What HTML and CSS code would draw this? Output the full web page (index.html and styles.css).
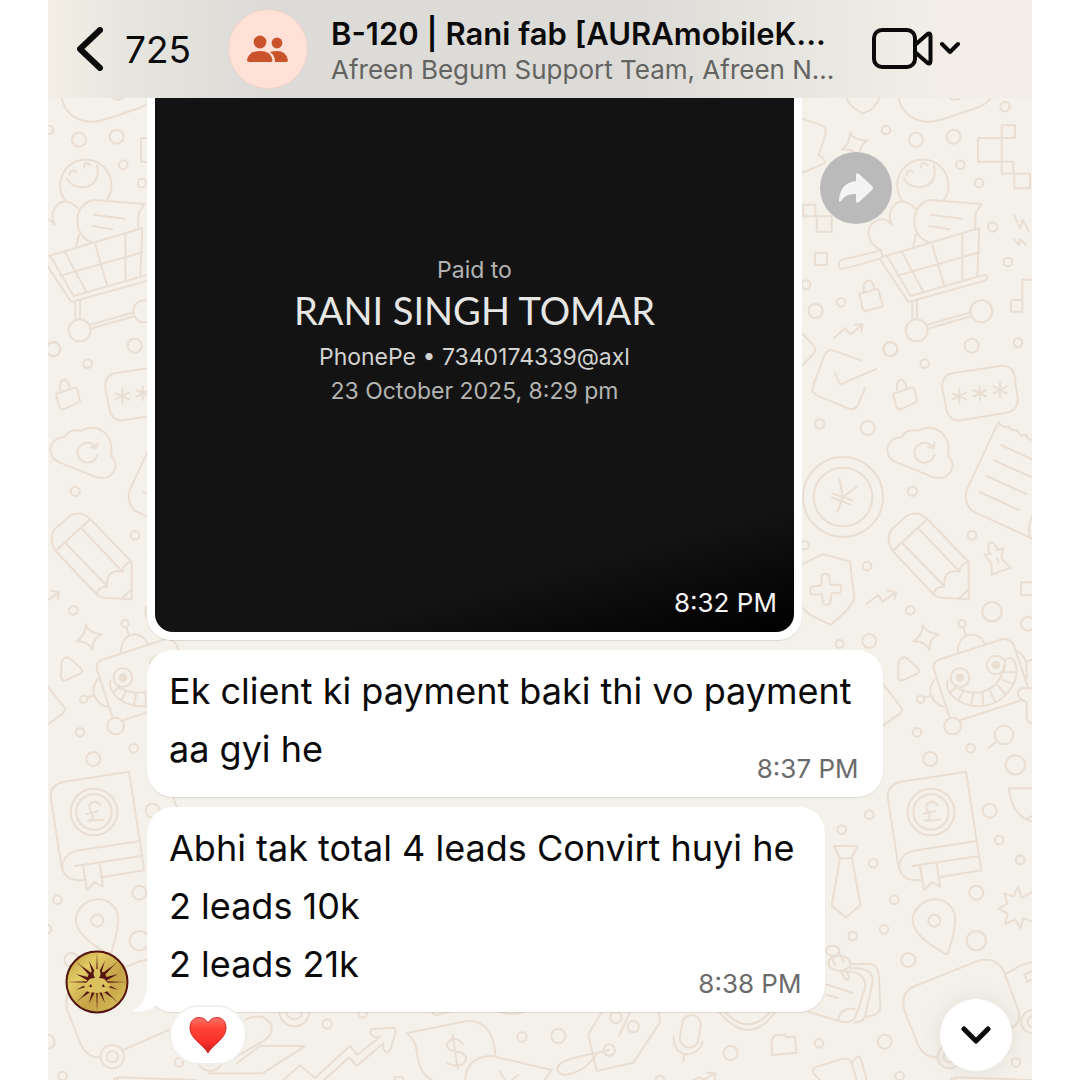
FILE: index.html
```html
<!DOCTYPE html>
<html lang="en">
<head>
    <meta charset="UTF-8">
    <meta name="viewport" content="width=device-width, initial-scale=1.0">
    <title>B-120 | Rani fab</title>
    <link rel="stylesheet" href="styles.css">
</head>
<body>
<div class="phone">

    <!-- wallpaper: one tile of doodles, repeated every 837 units -->
    <svg class="wallpaper" viewBox="48 0 984 1080" preserveAspectRatio="xMinYMin slice" aria-hidden="true">
        <defs>
            <g id="tile">
                <!-- shopping -->
                <g transform="translate(800 98) scale(.3333)">
                    <path d="M140 0Q150 30 190 46Q228 32 238 0M296 0Q310 60 370 70Q400 74 440 60L530 30Q560 18 572 0M450 0Q458 10 480 2"/>
                    <path d="M5 62L62 80Q82 88 76 110L56 172Q76 180 74 196L5 225M150 102Q160 128 203 127Q174 142 180 180Q160 150 126 154Q150 138 150 102Z"/>
                    <circle cx="615" cy="26" r="14"/><circle cx="258" cy="96" r="13"/><circle cx="348" cy="125" r="21"/><circle cx="461" cy="116" r="21"/><circle cx="481" cy="200" r="13"/><circle cx="537" cy="255" r="13"/><circle cx="578" cy="387" r="14"/><circle cx="624" cy="492" r="13"/><circle cx="18" cy="560" r="13"/><circle cx="47" cy="639" r="21"/><circle cx="123" cy="613" r="13"/><circle cx="271" cy="753" r="21"/><circle cx="515" cy="743" r="21"/><circle cx="654" cy="734" r="13"/>
                    <path d="M534 120H605V191H534ZM605 82H645V120H605ZM605 191H640V227H605ZM643 227H690V271H643ZM10 320H46V355H10ZM50 355H95V401H50ZM45 465H81V501H45ZM633 606H667V641H633ZM667 606V545H700"/>
                    <path d="M307 308A77 77 0 1 1 430 308M312 242C335 285 420 275 402 202M320 232Q322 210 340 222M363 208Q365 186 383 202"/>
                    <path d="M245 457C200 440 190 380 235 366Q260 358 275 381C255 330 295 300 320 314Q336 320 350 335M340 445L348 410M390 434C330 420 325 320 390 306L544 318L527 346L525 395M392 350L485 362M388 384L448 394"/>
                    <path d="M245 478L538 390L532 535M305 460L370 582M395 434L432 560M487 407V545M292 533L538 463M240 484L325 612L555 548Q568 540 555 530L332 594L262 475M240 458L124 486Q110 498 120 512Q126 516 240 482Q254 470 240 458"/>
                    <circle cx="350" cy="697" r="33"/><circle cx="544" cy="640" r="33"/>
                    <path d="M337 612V662M351 608V662M383 680L512 643M386 691L514 655"/>
                    <path d="M178 588L234 572L249 625L195 640L188 632ZM191 582V560Q206 536 220 558L222 574M643 353L660 390L668 365L688 402M643 425L657 440L660 424L678 439M103 719L135 690L151 710L187 680M165 680L187 678L184 702"/>
                    <path d="M5 705L42 744Q50 755 40 768L5 804"/>
                </g>
                <!-- office and security -->
                <g transform="translate(800 350) scale(.3333)">
                    <path d="M185 32L105 3Q85 -5 74 14L38 112Q34 128 50 136L145 175Q165 182 174 165L195 115M105 70L121 103L228 57"/>
                    <path d="M279 132L334 113Q342 112 345 124L351 155L302 178Q292 178 289 170ZM292 120C284 84 314 78 320 112"/>
                    <path d="M455 70L600 48Q638 44 644 80L653 145Q655 182 620 188L482 211Q448 214 440 180L427 115Q424 78 455 70ZM478 118V158M458 130L498 148M458 148L498 128M539 110V150M520 120L558 140M520 140L558 120M600 98V140M581 109L620 130M581 130L620 109"/>
                    <circle cx="271" cy="-2" r="21"/><circle cx="374" cy="41" r="13"/><circle cx="59" cy="222" r="14"/><circle cx="203" cy="234" r="21"/><circle cx="337" cy="424" r="14"/><circle cx="516" cy="556" r="13"/><circle cx="15" cy="586" r="12"/><circle cx="201" cy="648" r="13"/><circle cx="331" cy="781" r="13"/><circle cx="576" cy="785" r="29"/><circle cx="119" cy="882" r="12"/><circle cx="208" cy="873" r="21"/><circle cx="684" cy="821" r="21"/>
                    <path d="M305 261C260 262 245 315 285 335L400 382C450 395 475 345 444 317C455 250 400 215 353 243Q320 235 305 261ZM397 289A30 30 0 1 0 403 315M404 278L401 294L384 291"/>
                    <circle cx="129" cy="441" r="120"/><circle cx="129" cy="441" r="88"/>
                    <path d="M119 388L128 442L172 409M128 442L112 486M98 431L156 451M96 443L152 464"/>
                    <path d="M700 268Q685 274 678 254Q660 262 652 240Q632 244 626 230Q604 236 596 215L500 420Q490 455 515 482L700 568M603 285L700 330M583 331L700 384M560 378L678 432M539 426L656 480M700 495Q680 525 690 560"/>
                    <path d="M278 603Q255 565 275 538L320 498Q350 480 382 507L506 636V748L435 744Q410 744 400 732ZM278 603L382 507M308 580L432 708M358 538L474 660M506 636Q480 640 478 665Q430 655 432 710Q405 710 400 732M474 748L506 718"/>
                    <path d="M5 643L68 613L150 634L163 745Q158 770 92 825L30 795L5 772M65 674Q75 668 87 675L90 704L120 704Q128 715 120 728L95 730L90 760Q78 770 69 760L65 732L35 734Q26 720 34 710L64 706Z"/>
                    <path d="M200 761L235 736L248 755L288 727M263 722L288 727L284 748M553 614L573 611M591 601L609 594L604 625L632 653L576 674L574 640L553 614M568 607C558 575 580 565 592 598M592 625L596 640M700 697H663V735H700"/>
                    <path d="M368 823Q376 850 416 853Q386 866 389 900Q374 872 340 874Q370 855 368 823Z"/>
                </g>
                <!-- robot and book -->
                <g transform="translate(800 620) scale(.3333)">
                    <circle cx="486" cy="11" r="11"/><path d="M490 22L498 46M474 101C470 30 540 30 554 73M415 120L605 58Q630 52 642 78L685 205M415 120Q394 130 404 155L448 290M480 301L665 240M404 178Q380 210 400 238Q415 258 432 260M394 226L372 234M650 92Q680 110 680 140V175M680 125L700 118"/>
                    <circle cx="458" cy="318" r="25"/><circle cx="362" cy="238" r="11"/><circle cx="480" cy="173" r="28"/><circle cx="588" cy="135" r="28"/><circle class="dot" cx="480" cy="173" r="10"/><circle class="dot" cx="588" cy="135" r="10"/>
                    <path d="M443 182C430 215 480 265 550 258C620 250 670 170 642 122Q630 106 615 122M452 218L470 198M475 242L490 212M513 255L520 220M550 256L547 220M585 244L570 213M613 220L594 196M635 190L608 180M645 157L612 157M466 200C520 235 600 220 613 135"/>
                    <path d="M700 205H665Q645 215 660 235L680 248V295Q684 310 700 312M296 125Q305 105 322 116L352 143Q364 154 350 162L308 181Q294 184 294 168ZM245 187L305 264Q308 272 300 280L245 320"/>
                    <circle cx="351" cy="337" r="13"/><circle cx="512" cy="385" r="13"/><circle cx="391" cy="417" r="21"/><circle cx="612" cy="345" r="28"/><circle cx="646" cy="435" r="29"/><circle cx="569" cy="572" r="21"/><circle cx="208" cy="584" r="13"/><circle cx="125" cy="629" r="13"/><circle cx="598" cy="660" r="13"/><circle cx="661" cy="719" r="13"/><circle cx="220" cy="730" r="13"/>
                    <path d="M590 364L565 384M700 505H627Q635 590 700 605M675 598L700 586"/>
                    <path d="M300 486L498 455L544 751L415 772M362 780C310 785 300 760 294 730L263 530Q263 495 300 486M297 745Q298 705 340 692L526 664M337 738L535 708M360 738L372 810L395 787L420 800L410 730"/>
                    <circle cx="393" cy="576" r="70"/><circle cx="393" cy="576" r="53"/>
                    <path d="M412 555Q400 538 382 550C370 565 392 580 390 590Q388 600 375 602L421 599M370 582L405 574"/>
                    <path d="M102 678H172L154 715H120ZM120 715L95 857L138 893L181 854L156 715"/>
                </g>
                <!-- travel -->
                <g transform="translate(800 850) scale(.3333)">
                    <circle cx="661" cy="30" r="13"/><circle cx="529" cy="128" r="21"/><circle cx="283" cy="149" r="13"/><circle cx="252" cy="238" r="13"/><circle cx="158" cy="258" r="13"/><circle cx="325" cy="330" r="21"/><circle cx="529" cy="272" r="29"/><circle cx="254" cy="575" r="21"/><circle cx="57" cy="580" r="13"/><circle cx="299" cy="678" r="13"/><circle cx="648" cy="637" r="13"/>
                    <path d="M435 311C360 270 330 230 340 195C365 130 450 135 465 195C470 235 450 290 445 307Q440 315 435 311Z"/><circle cx="403" cy="212" r="18"/>
                    <path d="M654 110L665 142L700 125M654 110L641 140L613 130L622 160L596 176L623 190L616 222L645 208L662 235L670 204L700 216"/>
                    <path d="M345 408L530 334Q585 318 610 360L655 480Q665 515 640 530L480 600M345 408Q300 425 313 480L350 575Q370 625 412 622M620 370L665 345L700 335M700 362L674 373L682 395L700 388M465 688Q450 680 455 690M465 682L700 690"/>
                    <circle cx="448" cy="620" r="35"/><circle cx="448" cy="620" r="17"/><circle cx="700" cy="515" r="36"/><circle cx="700" cy="515" r="17"/>
                    <ellipse cx="98" cy="302" rx="20" ry="15"/><ellipse cx="118" cy="340" rx="33" ry="22"/>
                    <path d="M92 317L105 345M117 308L132 335M122 365L138 390Q148 388 147 380L135 358M78 403L158 429M78 434L113 444M25 485L120 514Q160 525 170 490L195 415Q200 360 130 365M115 510Q120 470 165 477M150 355Q225 350 217 400L195 500Q190 515 165 518M150 343L210 341Q235 345 237 380L241 470Q242 495 200 500"/>
                    <path d="M60 690L40 670Q35 655 50 650L130 626Q148 624 155 640L170 690M157 636L172 620Q180 618 185 635L200 690"/>
                </g>
            </g>
        </defs>
        <use href="#tile"/>
        <use href="#tile" x="-837"/>
        <!-- bottom strip -->
        <g transform="translate(300 990) scale(.3333)">
            <circle cx="82" cy="102" r="14"/><circle cx="188" cy="70" r="13"/><circle cx="666" cy="141" r="14"/><circle cx="775" cy="138" r="21"/><circle cx="1292" cy="189" r="21"/><circle cx="1080" cy="270" r="13"/><circle cx="-17" cy="64" r="45"/><circle cx="-17" cy="64" r="24"/><circle cx="-270" cy="205" r="38"/><circle cx="-270" cy="205" r="20"/>
            <path d="M-50 270L0 226L45 264L150 168L172 195L240 140H220Q202 128 215 118L275 113Q290 112 286 128L272 178Q262 194 250 178V160L170 228L148 202L72 270"/>
            <path d="M-165 90Q-140 75 -110 82Q-75 100 -88 130Q-92 140 -110 153L-225 220M-120 168H15L-112 250H-275M-120 168L-190 220"/>
            <path d="M395 270Q355 250 350 180Q346 150 320 130L500 93Q580 90 586 195M495 270Q500 200 575 198L755 240L735 270M457 135L474 238M488 162Q465 132 443 158C430 195 495 175 498 203Q495 240 440 220M598 242L615 270M655 255L635 270M283 270V262H309V270"/>
            <path d="M395 66Q405 80 420 72L450 66M600 66Q640 76 670 66M905 66L865 133L890 243L1000 218L1078 100Q1082 80 1075 66M990 66L957 138M928 180C850 200 770 205 772 240Q785 270 850 235Q880 210 890 193"/>
            <circle cx="948" cy="82" r="17"/><circle cx="1000" cy="110" r="17"/><circle cx="928" cy="180" r="17"/>
            <rect x="1143" y="75" width="56" height="98" rx="28" transform="rotate(9 1170 124)"/>
            <path d="M1121 140C1120 210 1195 205 1208 155M1153 196L1150 215M1258 66Q1300 118 1342 120Q1390 118 1425 66M1275 66Q1310 102 1342 103Q1380 102 1410 66M1415 150L1425 136L1454 134L1460 142L1485 140L1490 188L1416 195ZM1180 270L1200 262L1210 270L1245 250M1222 248L1246 250L1244 268"/>
        </g>
    </svg>

    <header class="topbar">
        <button class="back" type="button" aria-label="Back, 725 unread">
            <svg width="26" height="44" viewBox="0 0 26 44"><path d="M23 3L3 22L23 41"/></svg>
            <span>725</span>
        </button>
        <span class="group-pic">
            <svg width="42" height="28" viewBox="0 0 42 28">
                <circle cx="13" cy="7" r="6.4"/>
                <circle cx="30" cy="8" r="5.4"/>
                <path d="M0 25Q2 16 13 16Q24 16 25.500 25Q25.500 27 24 27H2Q0 27 0 25Z"/>
                <path d="M23 17Q27 16 30 16Q39 16 41 25Q41 27 39 27H28Q28 20 23 17Z"/>
            </svg>
        </span>
        <div class="chat-info">
            <h1>B-120 | Rani fab [AURAmobileK...</h1>
            <p>Afreen Begum Support Team, Afreen N...</p>
        </div>
        <button class="call" type="button" aria-label="Video call">
            <svg width="88" height="42" viewBox="0 0 88 42">
                <rect x="2" y="2" width="41" height="37" rx="8"/>
                <path d="M43 17L55 6.500Q58.500 4 58.500 8V33Q58.500 37 55 34.500L43 24"/>
                <path d="M70 16L78 24L86 16"/>
            </svg>
        </button>
    </header>

    <main class="chat">
        <div class="row">
            <div class="bubble photo-bubble">
                <div class="photo">
                    <p class="paid">Paid to</p>
                    <p class="payee">RANI SINGH TOMAR</p>
                    <p class="handle">PhonePe • 7340174339@axl</p>
                    <p class="date">23 October 2025, 8:29 pm</p>
                    <time>8:32 PM</time>
                </div>
            </div>
            <button class="forward" type="button" aria-label="Forward">
                <svg width="36" height="32" viewBox="0 0 36 32"><path d="M18 3Q18 0 21 2L34 14Q36 16 34 18L21 30Q18 32 18 29V22Q8 21 3 29Q1 31 1 28Q2 11 18 9Z"/></svg>
            </button>
        </div>

        <div class="row">
            <div class="bubble">
                <p>Ek client ki payment baki thi vo payment<br>aa gyi he</p>
                <time>8:37 PM</time>
            </div>
        </div>

        <div class="row">
            <svg class="sender" width="64" height="64" viewBox="0 0 64 64" role="img" aria-label="Sender">
                <defs>
                    <linearGradient id="gold" x1="0" y1="0" x2="1" y2="1">
                        <stop offset="0" stop-color="#b8943a"/><stop offset=".3" stop-color="#e2cb66"/><stop offset=".6" stop-color="#c4a347"/><stop offset="1" stop-color="#dcc25e"/>
                    </linearGradient>
                </defs>
                <circle cx="32" cy="32" r="30.500" fill="url(#gold)" stroke="#541410" stroke-width="2"/>
                <g fill="#541410">
                    <path id="ray4" d="M31 30L32 2L33 30ZM31 34L32 62L33 34ZM30 31L2 32L30 33ZM34 31L62 32L34 33Z"/>
                    <use href="#ray4" transform="rotate(45 32 32)"/>
                    <path id="ray" d="M29 30L24 11L34 29ZM34 30L40 11L30 29ZM29 34L24 53L34 35ZM34 34L40 53L30 35Z"/>
                    <use href="#ray" transform="rotate(90 32 32)"/>
                    <path d="M29 30L17 16L33 28ZM35 30L47 16L31 28ZM29 34L17 48L33 36ZM35 34L47 48L31 36Z"/>
                    <circle cx="32" cy="30" r="10"/>
                </g>
                <path fill="#dcc25e" d="M32 19Q35.500 19 35.500 24Q35.500 26 34 28Q40 28 41 31L46 36Q41 39 38 34L37 37Q44 37 46 40Q32 46 18 40Q20 37 27 37L26 34Q23 39 18 36L23 31Q24 28 30 28Q28.500 26 28.500 24Q28.500 19 32 19Z"/>
            </svg>
            <div class="bubble">
                <p>Abhi tak total 4 leads Convirt huyi he<br>2 leads 10k<br>2 leads 21k</p>
                <time>8:38 PM</time>
                <svg class="tail" width="38" height="24" viewBox="0 0 38 24"><path d="M14 0Q13 15 0 23Q14 25 23 17Q28 23 38 24V0Z"/></svg>
                <button class="reaction" type="button" aria-label="Heart reaction">
                    <svg width="38" height="38" viewBox="0 0 38 38">
                        <defs>
                            <linearGradient id="heart" x1="0" y1="0" x2="0" y2="1">
                                <stop offset="0" stop-color="#ff7267"/><stop offset=".3" stop-color="#ff4438"/><stop offset=".7" stop-color="#f8302b"/><stop offset="1" stop-color="#c01c1a"/>
                            </linearGradient>
                        </defs>
                        <path fill="url(#heart)" stroke="#d92a22" d="M19 7C15 -1 1 -1 1 12C1 23 14 28 19 37C24 28 37 23 37 12C37 -1 23 -1 19 7Z"/>
                    </svg>
                </button>
            </div>
        </div>
    </main>

    <button class="scroll-down" type="button" aria-label="Scroll to latest">
        <svg width="30" height="18" viewBox="0 0 30 18"><path d="M3 3L15 15L27 3"/></svg>
    </button>
</div>
</body>
</html>
```
FILE: styles.css
```css
* {
    box-sizing: border-box;
}
body {
    margin: 0;
    padding: 0 48px;
    background: #ffffff;
    color: #0a0a0a;
    font-family: Inter, "Liberation Sans", sans-serif;
}
h1, p {
    margin: 0;
    font-weight: 400;
}
button {
    padding: 0;
    border: 0;
    background: none;
    color: inherit;
    font: inherit;
    cursor: pointer;
}
svg {
    display: block;
    flex: none;
}

.phone {
    position: relative;
    min-height: 100vh;
    overflow: hidden;
    background: #f4f1ea;
}

/* doodles behind the chat */
.wallpaper {
    position: absolute;
    top: 0;
    left: 0;
    width: 100%;
    height: 100%;
    fill: none;
    stroke: #e9ded2;
    stroke-width: 6;
    stroke-linecap: round;
    stroke-linejoin: round;
}
.wallpaper .dot {
    fill: #e9ded2;
}

/* top bar */
.topbar {
    position: relative;
    display: flex;
    align-items: center;
    height: 98px;
    padding-left: 29px;
    background: linear-gradient(90deg, #f3efe6 0%, #e7e5df 8%, #dcdbd7 22%, #dcdbd7 60%, #e9e7e1 78%, #f3efe8 92%);
}
.back {
    display: flex;
    align-items: center;
    gap: 22px;
    width: 151px;
    font-size: 37px;
}
.back svg,
.call svg,
.scroll-down svg {
    fill: none;
    stroke: #0a0a0a;
    stroke-linecap: round;
    stroke-linejoin: round;
}
.back svg {
    stroke-width: 6;
}
.group-pic {
    display: grid;
    place-items: center;
    flex: none;
    width: 80px;
    height: 80px;
    border: 1px solid #efd3c8;
    border-radius: 50%;
    background: #ffe1d7;
    fill: #c9532b;
}
.chat-info {
    padding: 6px 0 0 23px;
    line-height: 36px;
    white-space: nowrap;
}
.chat-info h1 {
    font-size: 31px;
    font-weight: 600;
}
.chat-info p {
    color: #636361;
    font-size: 26px;
}
.call {
    margin: 0 72px 0 auto;
}
.call svg {
    stroke-width: 4;
}

/* messages */
.chat {
    position: relative;
    display: grid;
    gap: 10px;
}
.row {
    position: relative;
    display: flex;
    padding-left: 99px;
}
.bubble {
    position: relative;
    padding: 12px 31px 19px 22px;
    border-radius: 26px;
    background: #ffffff;
    box-shadow: 0 1px 1px rgba(0, 0, 0, .1);
    font-size: 36px;
    line-height: 58px;
}
.bubble time {
    position: absolute;
    right: 24px;
    bottom: 12px;
    color: #6b6b6b;
    font-size: 26px;
    line-height: 32px;
}
.photo-bubble {
    width: 74%;
    padding: 0 8px 8px;
    border-radius: 0 0 24px 24px;
}
.photo {
    position: relative;
    height: 534px;
    padding-top: 155px;
    border-radius: 0 0 18px 18px;
    background: linear-gradient(345deg, #000000, #131313 18%);
    color: #b4b4b2;
    font-size: 23px;
    line-height: 34px;
    text-align: center;
}
.photo .payee {
    color: #e6e6e4;
    font-family: Lato, "Open Sans", sans-serif;
    font-size: 38px;
    line-height: 46px;
}
.photo .handle {
    padding-top: 7px;
    color: #d2d2d0;
}
.photo time {
    right: 17px;
    bottom: 13px;
    color: #f5f5f5;
}
.forward {
    display: grid;
    place-items: center;
    width: 72px;
    height: 72px;
    margin: 54px 0 0 18px;
    border-radius: 50%;
    background: #bababa;
    fill: #f4f4f4;
}
.sender {
    position: absolute;
    left: 17px;
    bottom: -2px;
}
.tail {
    position: absolute;
    left: -14px;
    bottom: 0;
    fill: #ffffff;
}
.reaction {
    position: absolute;
    left: 22px;
    top: 198px;
    display: grid;
    place-items: center;
    width: 78px;
    height: 60px;
    border: 2px solid #f1efeb;
    border-radius: 30px;
    background: #ffffff;
}

.scroll-down {
    position: absolute;
    right: 20px;
    bottom: 9px;
    display: grid;
    place-items: center;
    width: 72px;
    height: 72px;
    border-radius: 50%;
    background: #ffffff;
    box-shadow: 0 0 24px rgba(0, 0, 0, .08);
}
.scroll-down svg {
    stroke-width: 5;
}
```
